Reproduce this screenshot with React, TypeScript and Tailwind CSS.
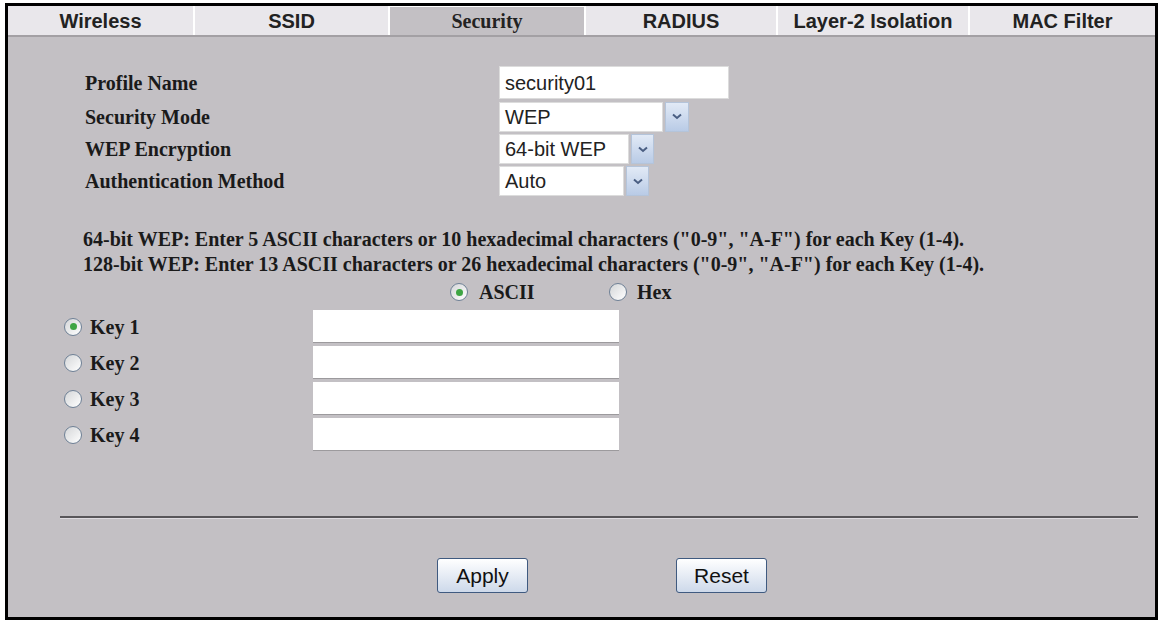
import { useState } from "react";

const tabs = [
  { label: "Wireless", w: "w-[185px]" },
  { label: "SSID", w: "w-[195px]" },
  { label: "Security", w: "w-[196px]" },
  { label: "RADIUS", w: "w-[192px]" },
  { label: "Layer-2 Isolation", w: "w-[192px]" },
  { label: "MAC Filter", w: "w-[187px]" },
];

const serif = "font-['Liberation_Serif',serif]";
const sans = "font-['Liberation_Sans',Arial,sans-serif]";

const Radio = ({ checked, onClick }: { checked: boolean; onClick?: () => void }) => (
  <span
    onClick={onClick}
    className="w-[18px] h-[18px] rounded-full border border-[#6f8196] bg-gradient-to-br from-[#d4d6d8] to-white flex items-center justify-center shrink-0 cursor-pointer"
  >
    {checked && <span className="w-[7px] h-[7px] rounded-full bg-[#3ea544]" />}
  </span>
);

const Arrow = ({ className }: { className: string }) => (
  <span
    className={`${className} h-[30px] ml-[2px] border border-[#b4c4da] bg-gradient-to-b from-[#e2eaf6] to-[#b9cbe6] flex items-center justify-center`}
  >
    <svg width="10" height="7" viewBox="0 0 10 7">
      <path d="M1 1.5 L5 5 L9 1.5" fill="none" stroke="#4a5e82" strokeWidth="2" />
    </svg>
  </span>
);

const Select = ({ value, field, arrow }: { value: string; field: string; arrow: string }) => (
  <div className="flex items-center">
    <div className={`${field} h-[30px] bg-white border border-[#dcdcdc] flex items-center px-[5px] text-[20px] font-normal text-[#222] ${sans}`}>
      {value}
    </div>
    <Arrow className={arrow} />
  </div>
);

const App = () => {
  const [keyIndex, setKeyIndex] = useState(1);
  const [format, setFormat] = useState("ascii");

  return (
    <div className="w-[1159px] h-[623px] bg-white pt-[3px] pl-[5px]">
      <div className="w-[1153px] h-[617px] border-[3px] border-black bg-[#c3c0c4] flex flex-col">
        {/* Tabs */}
        <div className="flex h-[31px] bg-[#e9e7eb] border-b-2 border-[#a3a0a4]">
          {tabs.map((t, i) => (
            <div
              key={t.label}
              className={`${t.w} flex items-center justify-center text-[20px] font-bold text-[#222] ${
                i > 0 ? "border-l-2 border-white" : ""
              } ${t.label === "Security" ? `bg-[#c3c0c4] border-t border-[#a9a6aa] ${serif}` : sans}`}
            >
              {t.label}
            </div>
          ))}
        </div>

        <div className={`flex flex-col ${serif} font-bold text-[20px] text-[#1a1a1a]`}>
          {/* Profile settings */}
          <div className="flex flex-col mt-[28px] pl-[77px]">
            <div className="flex items-center h-[35px]">
              <span className="w-[414px]">Profile Name</span>
              <div className={`w-[230px] h-[33px] bg-white border border-[#dcdcdc] flex items-center px-[5px] font-normal text-[#222] ${sans}`}>
                security01
              </div>
            </div>
            <div className="flex items-center h-[33px]">
              <span className="w-[414px]">Security Mode</span>
              <Select value="WEP" field="w-[164px]" arrow="w-[24px]" />
            </div>
            <div className="flex items-center h-[32px]">
              <span className="w-[414px]">WEP Encryption</span>
              <Select value="64-bit WEP" field="w-[130px]" arrow="w-[23px]" />
            </div>
            <div className="flex items-center h-[32px]">
              <span className="w-[414px]">Authentication Method</span>
              <Select value="Auto" field="w-[125px]" arrow="w-[23px]" />
            </div>
          </div>

          {/* Help text */}
          <div className="pl-[75px] mt-[30px] leading-[25px]">
            <p>64-bit WEP: Enter 5 ASCII characters or 10 hexadecimal characters ("0-9", "A-F") for each Key (1-4).</p>
            <p>128-bit WEP: Enter 13 ASCII characters or 26 hexadecimal characters ("0-9", "A-F") for each Key (1-4).</p>
          </div>

          <div className="flex items-center h-[30px] pl-[442px]">
            <Radio checked={format === "ascii"} onClick={() => setFormat("ascii")} />
            <span className="ml-[11px] w-[130px]">ASCII</span>
            <Radio checked={format === "hex"} onClick={() => setFormat("hex")} />
            <span className="ml-[10px]">Hex</span>
          </div>

          {/* Keys */}
          <div className="flex flex-col gap-[3px] mt-[3px] pl-[56px]">
            {[1, 2, 3, 4].map((k) => (
              <div key={k} className="flex items-center h-[33px]">
                <div className="w-[249px] flex items-center">
                  <Radio checked={keyIndex === k} onClick={() => setKeyIndex(k)} />
                  <span className="ml-[8px]">Key {k}</span>
                </div>
                <div className="w-[306px] h-[33px] bg-white border-b border-[#9c9a9d]" />
              </div>
            ))}
          </div>

          {/* Divider */}
          <div className="ml-[52px] mr-[17px] mt-[65px] h-[2px] bg-[#58565a] border-b border-[#dedbe0] box-content" />

          {/* Actions */}
          <div className={`flex mt-[39px] pl-[429px] gap-[148px] ${sans} font-normal`}>
            <button className="w-[91px] h-[35px] rounded-[3px] border border-[#3f5a80] bg-gradient-to-b from-white to-[#cdd9ea] text-[21px] text-[#111]">
              Apply
            </button>
            <button className="w-[91px] h-[35px] rounded-[3px] border border-[#3f5a80] bg-gradient-to-b from-white to-[#cdd9ea] text-[21px] text-[#111]">
              Reset
            </button>
          </div>
        </div>
      </div>
    </div>
  );
};

export default App;
